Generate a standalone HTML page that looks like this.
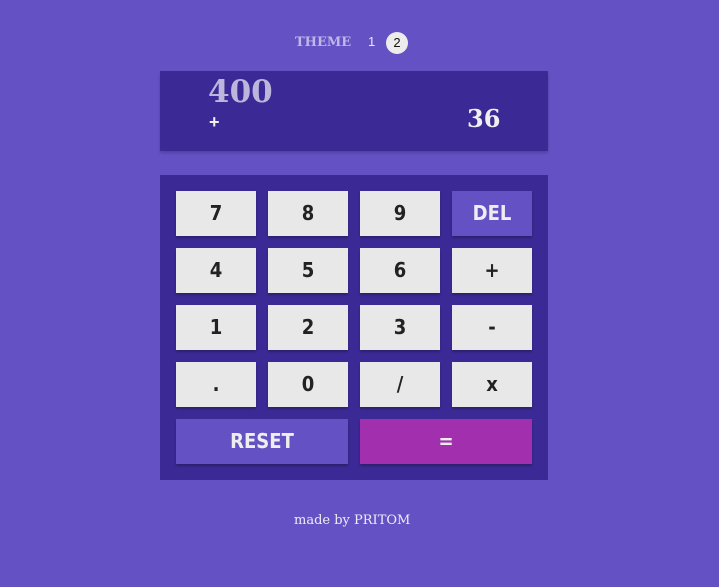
<!DOCTYPE html>
<html><head><style>
body{margin:0;width:719px;height:587px;background:#6452c4;font-family:"DejaVu Serif",serif;position:relative;overflow:hidden}
.a{position:absolute}
.theme{left:295px;top:35px;font-size:13px;font-weight:bold;color:#c0b6e8}
.t1{left:368px;top:34px;font-size:13px;color:#e8e8f0;font-family:"Liberation Sans",sans-serif}
.t2{left:386px;top:32px;width:22px;height:22px;border-radius:50%;background:#ececec;color:#111;font-size:13px;text-align:center;line-height:22px;font-family:"Liberation Sans",sans-serif}
.disp{left:160px;top:71px;width:388px;height:80px;background:#3b2a95;box-shadow:0 2px 3px rgba(0,0,0,.2)}
.pad{left:160px;top:175px;width:388px;height:305px;background:#3b2a95}
.k{position:absolute;width:80px;height:45px;background:#e8e8e8;color:#222;font-family:"DejaVu Sans","Liberation Sans",sans-serif;font-stretch:condensed;font-weight:bold;font-size:20px;text-align:center;line-height:45px;box-shadow:0 2px 2px rgba(0,0,0,.25)}
</style></head><body>
<div class="a theme">THEME</div>
<div class="a t1">1</div>
<div class="a t2">2</div>
<div class="a disp"></div>
<div class="a" style="left:208px;top:74px;font-size:31px;font-weight:bold;color:#bcb6dc">400</div>
<div class="a" style="left:209px;top:112px;font-size:18px;font-weight:bold;color:#f0f0f0;font-family:'Liberation Sans',sans-serif">+</div>
<div class="a" style="left:467px;top:104px;font-size:24px;font-weight:bold;color:#f0f0f0">36</div>
<div class="a pad"></div>
<div class="k" style="left:176px;top:191px">7</div>
<div class="k" style="left:268px;top:191px">8</div>
<div class="k" style="left:360px;top:191px">9</div>
<div class="k" style="left:452px;top:191px;background:#6452c4;color:#eee">DEL</div>
<div class="k" style="left:176px;top:248px">4</div>
<div class="k" style="left:268px;top:248px">5</div>
<div class="k" style="left:360px;top:248px">6</div>
<div class="k" style="left:452px;top:248px">+</div>
<div class="k" style="left:176px;top:305px">1</div>
<div class="k" style="left:268px;top:305px">2</div>
<div class="k" style="left:360px;top:305px">3</div>
<div class="k" style="left:452px;top:305px">-</div>
<div class="k" style="left:176px;top:362px">.</div>
<div class="k" style="left:268px;top:362px">0</div>
<div class="k" style="left:360px;top:362px">/</div>
<div class="k" style="left:452px;top:362px">x</div>
<div class="k" style="left:176px;top:419px;width:172px;background:#6452c4;color:#eee">RESET</div>
<div class="k" style="left:360px;top:419px;width:172px;background:#a22fae;color:#eee">=</div>
<div class="a" style="left:294px;top:513px;font-size:13px;color:#ececf4">made by PRITOM</div>
</body></html>
